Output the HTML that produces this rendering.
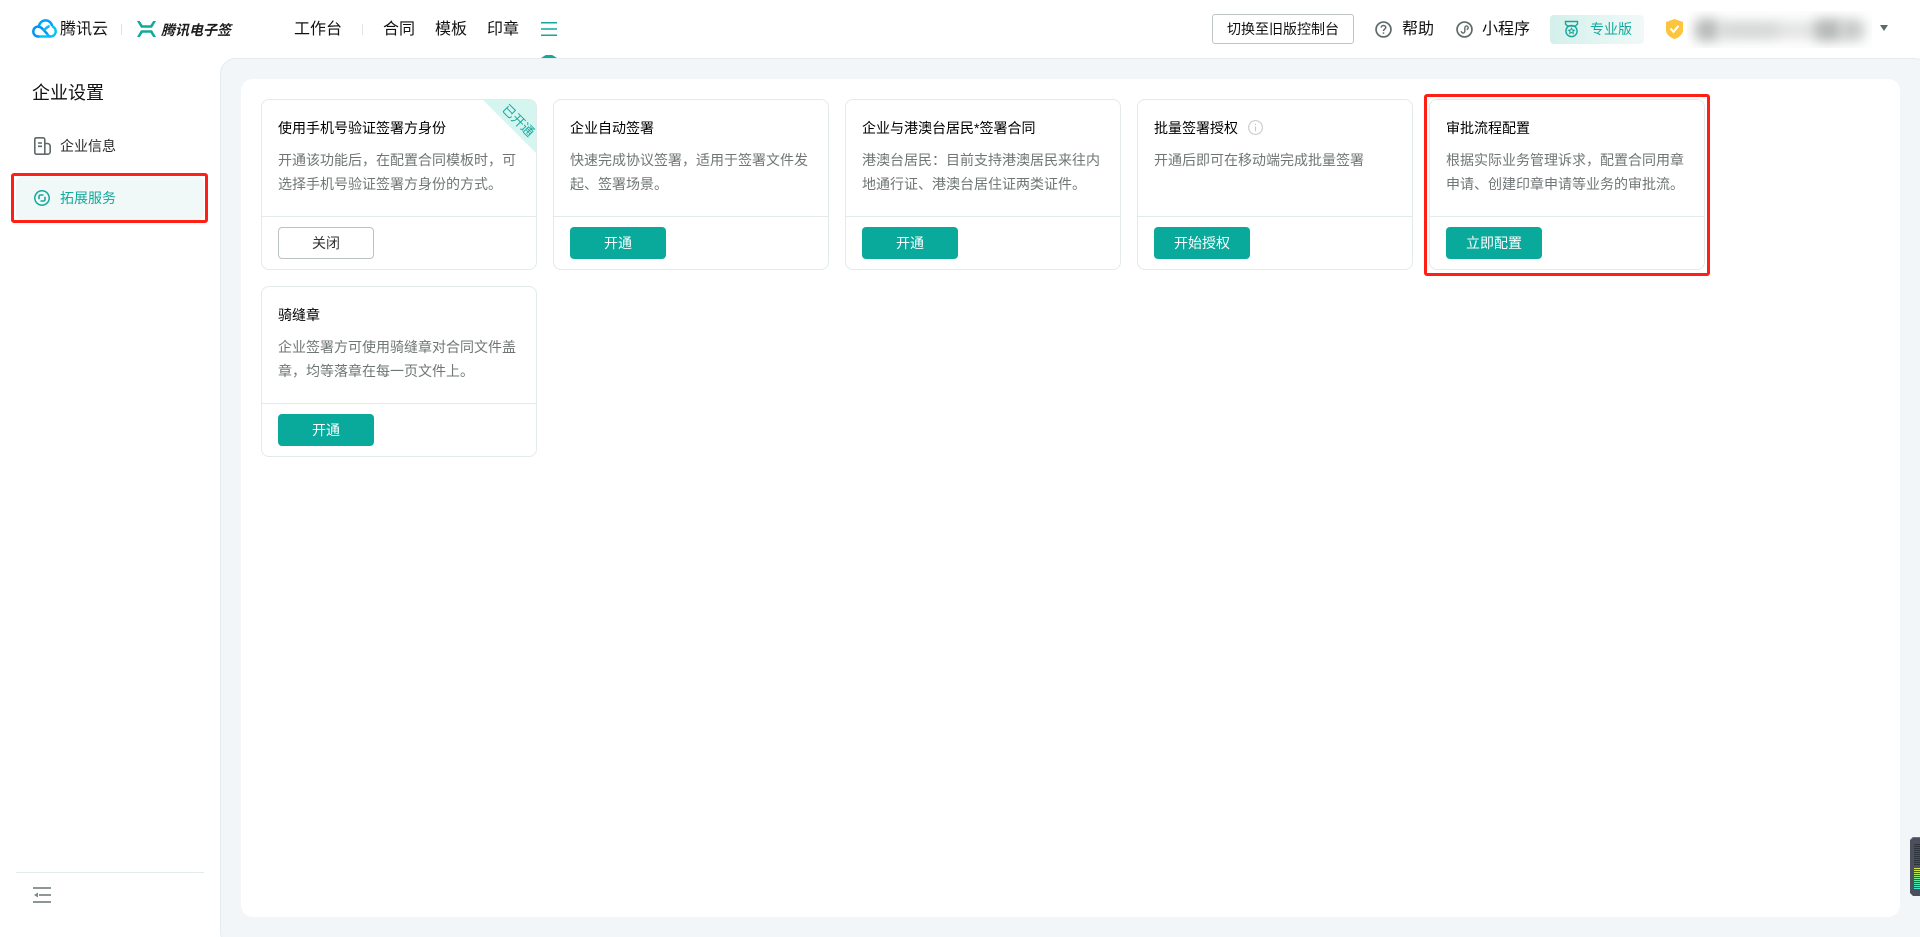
<!DOCTYPE html>
<html lang="zh-CN">
<head>
<meta charset="utf-8">
<title>企业设置</title>
<style>
html,body{margin:0;padding:0;width:1920px;height:937px;overflow:hidden;background:#fff}
body{position:relative;font-family:"Liberation Sans","Noto Sans CJK SC","Microsoft YaHei",sans-serif;color:#000}
.a{position:absolute}
.t{position:absolute;white-space:nowrap;line-height:22px}
svg{position:absolute;display:block}
.nav{font-size:16px;color:#111;top:19px}
.panel{left:220px;top:58px;width:1710px;height:890px;box-sizing:border-box;background:#f3f6f9;border:1px solid #e4ebed;border-radius:16px}
.inner{left:241px;top:79px;width:1659px;height:838px;background:#fff;border-radius:12px}
.card{position:absolute;width:276px;height:171px;box-sizing:border-box;background:#fff;border:1px solid #e3eaea;border-radius:8px;overflow:hidden}
.card h4{position:absolute;left:16px;top:17px;margin:0;font-size:14px;font-weight:400;line-height:22px;color:#000;white-space:nowrap}
.card p{position:absolute;left:16px;top:48px;margin:0;font-size:14px;line-height:24px;color:#6f7675;white-space:nowrap}
.card i{position:absolute;left:0;right:0;top:116px;height:1px;background:#e3eaea}
.btn{position:absolute;left:16px;top:127px;width:96px;height:32px;box-sizing:border-box;border-radius:4px;background:#09a99b;color:#fff;font-size:14px;line-height:32px;text-align:center;white-space:nowrap}
.btn.off{background:#fff;border:1px solid #bcc1c1;color:#333;line-height:30px}
</style>
</head>
<body>

<!-- header logos -->
<svg style="left:32px;top:19px" width="25" height="19" viewBox="0 0 25 19" fill="none">
  <path d="M6.600 7.800C7.600 3.800 10.200 1.400 13.500 1.400c3.500 0 6.200 2.600 6.700 5.900" stroke="#00a2ff" stroke-width="2.500"/>
  <path d="M20.200 7.300C22.400 8.100 23.700 10.200 23.700 12.300 23.700 15.200 21.400 17.500 18.600 17.500H6.300" stroke="#00c8f0" stroke-width="2.500"/>
  <path d="M6.300 17.500C3.300 17.500 1.300 15.200 1.300 12.500 1.300 9.700 3.300 7.600 6 7.600c2.600 0 4.300 1.900 6 3.700L15.300 15" stroke="#0096f5" stroke-width="2.500" stroke-linecap="round"/>
  <path d="M18.600 17.500c-1.300 0-2.400-1.100-3.300-2.500M12 11.300c1.600-1.700 3.100-3.700 5.600-4.200" stroke="#12b5f5" stroke-width="2.500"/>
</svg>
<div class="t" style="left:60px;top:19px;font-size:16px;color:#111">腾讯云</div>
<div class="a" style="left:121px;top:24px;width:1px;height:11px;background:#dfe3e3"></div>
<svg style="left:137px;top:21px" width="19" height="16" viewBox="0 0 19 16" fill="#12a89a">
  <path d="M0 0H2.800L5.600 4.200H13.400L16.200 0H19L15 6.800H4z"/>
  <path d="M0 16H2.800L5.600 11.800H13.400L16.200 16H19L15 9.200H4z"/>
</svg>
<div class="t" style="left:161px;top:19px;font-size:14px;font-weight:700;font-style:italic;color:#1c1c1c">腾讯电子签</div>

<!-- nav -->
<div class="t nav" style="left:294px">工作台</div>
<div class="a" style="left:362px;top:24px;width:1px;height:11px;background:#e1e5e5"></div>
<div class="t nav" style="left:383px">合同</div>
<div class="t nav" style="left:435px">模板</div>
<div class="t nav" style="left:487px">印章</div>
<svg style="left:541px;top:22px" width="16" height="14" viewBox="0 0 16 14" fill="none" stroke="#12a89a" stroke-width="1.500">
  <path d="M0 .7H16M0 7H16M0 13.300H16"/>
</svg>

<!-- right header -->
<div class="a" style="left:1212px;top:14px;width:142px;height:30px;box-sizing:border-box;border:1px solid #bfc4c4;border-radius:3px;font-size:14px;line-height:29px;text-align:center;color:#111;white-space:nowrap">切换至旧版控制台</div>
<svg style="left:1375px;top:21px" width="17" height="17" viewBox="0 0 16 16" fill="none" stroke="#5d6a69" stroke-width="1.600">
  <circle cx="8" cy="8" r="7"/>
  <path d="M5.900 6.200C5.900 5 6.800 4.200 8 4.200s2.100.8 2.100 1.900c0 1.600-2.100 1.700-2.100 3.300" stroke-width="1.400"/>
  <path d="M8 10.700v1.400" stroke-width="1.400"/>
</svg>
<div class="t" style="left:1402px;top:19px;font-size:16px;color:#111">帮助</div>
<svg style="left:1456px;top:21px" width="17" height="17" viewBox="0 0 16 16" fill="none" stroke="#5d6a69" stroke-width="1.600">
  <circle cx="8" cy="8" r="7"/>
  <path d="M5 9.500c0 1.100.8 1.800 1.700 1.800S8.300 10.500 8.300 9.500V6.500c0-1 .7-1.800 1.600-1.800S11.500 5.500 11.500 6.400 10.800 8 10 8" stroke-width="1.300"/>
</svg>
<div class="t" style="left:1482px;top:19px;font-size:16px;color:#111">小程序</div>
<div class="a" style="left:1550px;top:15px;width:94px;height:29px;border-radius:4px;background:linear-gradient(90deg,#d4f0eb,#f1f9f8)"></div>
<svg style="left:1564px;top:20px" width="15" height="18" viewBox="0 0 15 17" fill="none" stroke="#12a89a" stroke-width="1.400">
  <path d="M1.500 1h12v2.500l-2 2h-8l-2-2z"/>
  <circle cx="7.500" cy="10.500" r="5.600"/>
  <path d="M7.500 7.700l.9 1.800 2 .2-1.500 1.300.4 1.900-1.800-1-1.800 1 .4-1.900-1.500-1.300 2-.2z" stroke-width="1"/>
</svg>
<div class="t" style="left:1590px;top:18px;font-size:14px;color:#14a99c">专业版</div>
<svg style="left:1666px;top:19px" width="17" height="20" viewBox="0 0 17 20">
  <path d="M8.500 0 17 3V11c0 4.500-4 7.500-8.500 9C4 18.500 0 15.500 0 11V3z" fill="#fbc63d"/>
  <path d="M4.500 9.500 7.500 12.800 12.500 6.800" fill="none" stroke="#fff" stroke-width="2"/>
</svg>
<div class="a" style="left:1687px;top:11px;width:185px;height:37px;background:#fff;overflow:hidden">
  <div class="a" style="left:8px;top:11px;width:170px;height:16px;background:#dfe0e0;filter:blur(7px)"></div>
  <div class="a" style="left:10px;top:9px;width:20px;height:20px;background:#b4b7b7;filter:blur(6px)"></div>
  <div class="a" style="left:36px;top:14px;width:55px;height:11px;background:#d2d4d4;filter:blur(6px)"></div>
  <div class="a" style="left:128px;top:9px;width:26px;height:20px;background:#b4b7b7;filter:blur(6px)"></div>
  <div class="a" style="left:156px;top:10px;width:18px;height:18px;background:#c4c6c6;filter:blur(6px)"></div>
</div>
<svg style="left:1880px;top:25px" width="8" height="6" viewBox="0 0 8 6"><path d="M0 0H8L4 6z" fill="#5c6b6a"/></svg>

<!-- sidebar -->
<div class="t" style="left:32px;top:81px;font-size:18px;line-height:24px;color:#111">企业设置</div>
<svg style="left:34px;top:137px" width="17" height="18" viewBox="0 0 17 18" fill="none" stroke="#5d6a69" stroke-width="1.600">
  <path d="M2.500 .8H9c1 0 1.800.8 1.800 1.800v14.600H2.500C1.500 17.200.8 16.400.8 15.500V2.500C.8 1.500 1.500 .8 2.500 .8z"/>
  <path d="M10.800 6.500h2.500c1.600 0 2.900 1.300 2.900 2.900v5.300c0 1.400-1.100 2.500-2.500 2.500h-2.900"/>
  <path d="M4 6H8M4 9.300H8"/>
</svg>
<div class="t" style="left:60px;top:135px;font-size:14px;color:#2a2a2a">企业信息</div>
<div class="a" style="left:16px;top:177px;width:188px;height:43px;background:#f0f9f8;border-radius:6px"></div>
<svg style="left:34px;top:190px" width="16" height="16" viewBox="0 0 16 16" fill="none" stroke="#14a99c" stroke-width="1.500">
  <circle cx="8" cy="8" r="7.200"/>
  <path d="M5 9.300V6.500C5 5.700 5.700 5 6.500 5H9.500M11 6.700V9.500C11 10.300 10.300 11 9.500 11H6.500" stroke-width="1.600"/>
</svg>
<div class="t" style="left:60px;top:187px;font-size:14px;color:#14a99c">拓展服务</div>
<div class="a" style="left:11px;top:173px;width:197px;height:50px;box-sizing:border-box;border:3px solid #ff1f14;border-radius:3px"></div>
<div class="a" style="left:16px;top:872px;width:188px;height:1px;background:#e3eaea"></div>
<svg style="left:33px;top:887px" width="18" height="16" viewBox="0 0 18 16" fill="none" stroke="#7d8986" stroke-width="1.800">
  <path d="M0 1H18M6 8H18M0 15H18"/>
  <path d="M1 8 5 5.500V10.500z" fill="#7d8986" stroke="none"/>
</svg>

<!-- main panel -->
<div class="a panel"></div>
<div class="a" style="left:541px;top:55px;width:16px;height:3px;background:#12a89a;clip-path:polygon(30% 0,70% 0,100% 100%,0 100%)"></div>
<div class="a inner"></div>

<!-- cards -->
<div class="card" style="left:261px;top:99px">
  <h4>使用手机号验证签署方身份</h4>
  <p>开通该功能后，在配置合同模板时，可<br>选择手机号验证签署方身份的方式。</p>
  <i></i>
  <div class="btn off">关闭</div>
  <div class="a" style="right:0;top:0;width:53px;height:53px;background:#d5f5f0;clip-path:polygon(0 0,100% 0,100% 100%)"></div>
  <div class="t" style="left:231px;top:12px;width:50px;text-align:center;font-size:13px;line-height:18px;color:#14a99c;transform:rotate(45deg)">已开通</div>
</div>
<div class="card" style="left:553px;top:99px">
  <h4>企业自动签署</h4>
  <p>快速完成协议签署，适用于签署文件发<br>起、签署场景。</p>
  <i></i>
  <div class="btn">开通</div>
</div>
<div class="card" style="left:845px;top:99px">
  <h4>企业与港澳台居民*签署合同</h4>
  <p>港澳台居民：目前支持港澳居民来往内<br>地通行证、港澳台居住证两类证件。</p>
  <i></i>
  <div class="btn">开通</div>
</div>
<div class="card" style="left:1137px;top:99px">
  <h4>批量签署授权</h4>
  <svg style="left:110px;top:20px" width="15" height="15" viewBox="0 0 14 14" fill="none" stroke="#c5caca" stroke-width="1">
    <circle cx="7" cy="7" r="6.400"/>
    <path d="M7 6v4.500M7 3.500v1.200"/>
  </svg>
  <p>开通后即可在移动端完成批量签署</p>
  <i></i>
  <div class="btn">开始授权</div>
</div>
<div class="card" style="left:1429px;top:99px">
  <h4>审批流程配置</h4>
  <p>根据实际业务管理诉求，配置合同用章<br>申请、创建印章申请等业务的审批流。</p>
  <i></i>
  <div class="btn">立即配置</div>
</div>
<div class="card" style="left:261px;top:286px">
  <h4>骑缝章</h4>
  <p>企业签署方可使用骑缝章对合同文件盖<br>章，均等落章在每一页文件上。</p>
  <i></i>
  <div class="btn">开通</div>
</div>

<div class="a" style="left:1424px;top:94px;width:286px;height:182px;box-sizing:border-box;border:3px solid #ff1f14;border-radius:3px"></div>

<!-- floating widget -->
<svg style="left:1910px;top:837px" width="10" height="59" viewBox="0 0 10 59">
  <path d="M3 0H10V59H3L0 56V3z" fill="#4b505c"/>
  <path d="M.5 3 3 .5H10" fill="none" stroke="#6c7280"/>
  <g fill="#2f333b">
    <rect x="4" y="7" width="6" height="1"/><rect x="4" y="9" width="6" height="1"/><rect x="4" y="11" width="6" height="1"/><rect x="4" y="13" width="6" height="1"/><rect x="4" y="15" width="6" height="1"/><rect x="4" y="17" width="6" height="1"/><rect x="4" y="19" width="6" height="1"/><rect x="4" y="21" width="6" height="1"/><rect x="4" y="23" width="6" height="1"/><rect x="4" y="25" width="6" height="1"/><rect x="4" y="27" width="6" height="1"/>
  </g>
  <rect x="4" y="31" width="6" height="1" fill="#d5e84a"/><rect x="4" y="33" width="6" height="1" fill="#d0e84a"/><rect x="4" y="35" width="6" height="1" fill="#c4e855"/><rect x="4" y="37" width="6" height="1" fill="#aae868"/><rect x="4" y="39" width="6" height="1" fill="#90e87a"/><rect x="4" y="41" width="6" height="1" fill="#78e88c"/><rect x="4" y="43" width="6" height="1" fill="#62e89c"/><rect x="4" y="45" width="6" height="1" fill="#50e8aa"/><rect x="4" y="47" width="6" height="1" fill="#45e8b8"/><rect x="4" y="49" width="6" height="1" fill="#40e8c0"/><rect x="4" y="51" width="6" height="1" fill="#40e8c8"/>
</svg>

</body>
</html>
